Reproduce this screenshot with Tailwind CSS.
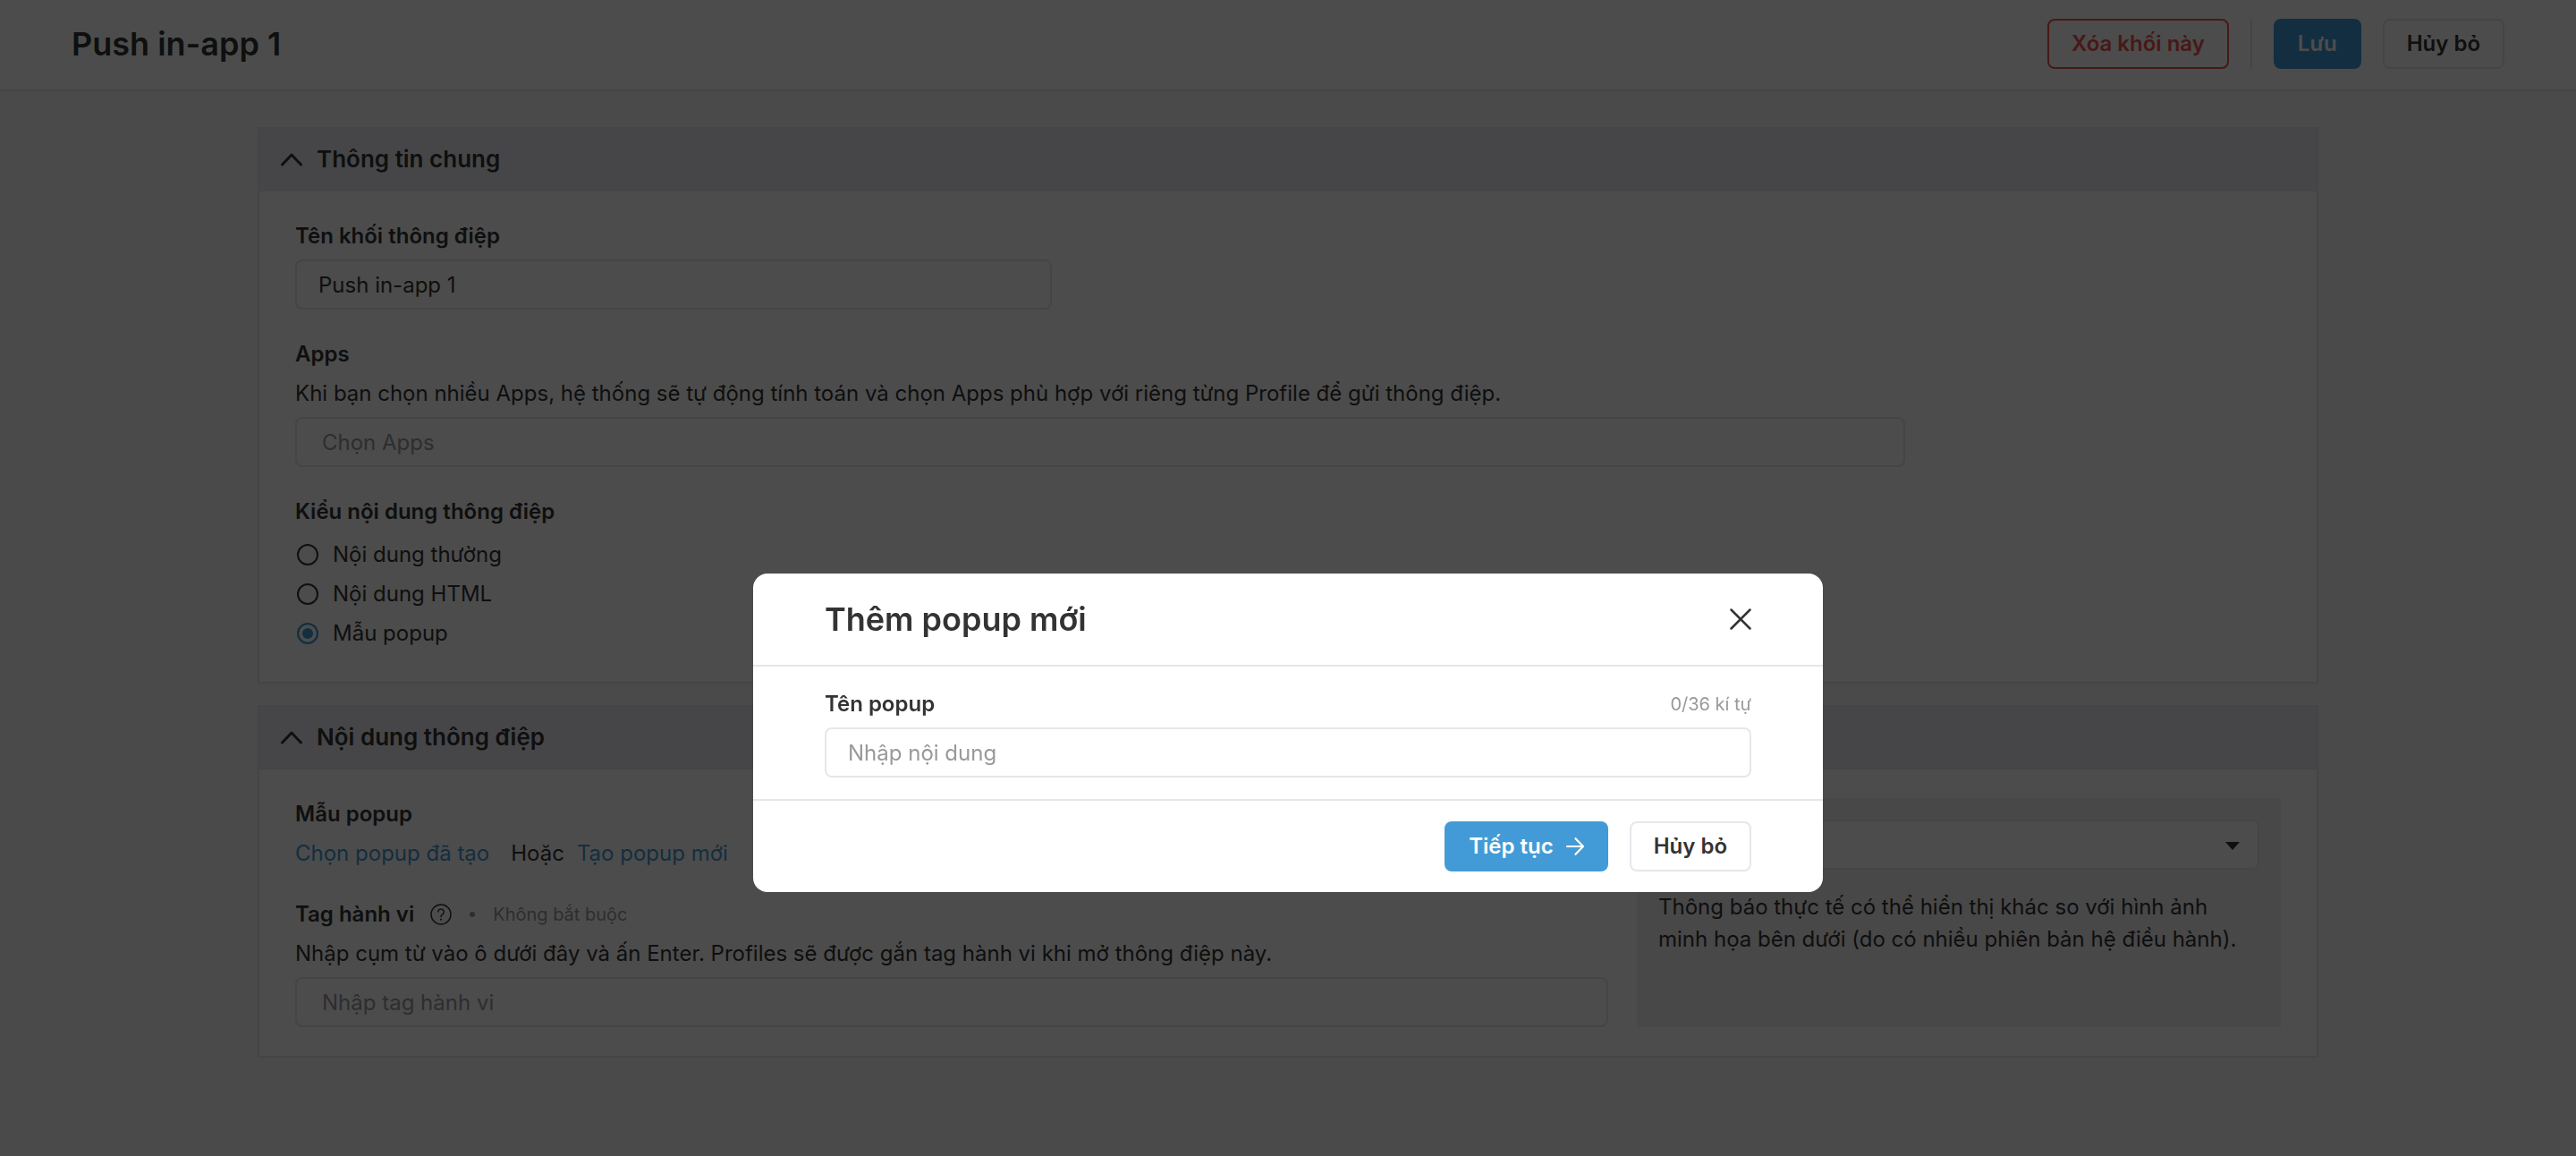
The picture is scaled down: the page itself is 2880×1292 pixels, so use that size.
<!DOCTYPE html>
<html lang="vi">
<head>
    <meta charset="UTF-8">
    <meta name="viewport" content="width=device-width, initial-scale=1.0">
    <title>Push in-app 1</title>
    <script src="https://cdn.jsdelivr.net/npm/@tailwindcss/browser@4"></script>
</head>
<body class="font-[Inter,'Noto_Sans',sans-serif] text-2xl leading-9 text-[#333] bg-[#f7f9fc] min-h-screen">

    <!-- Page header -->
    <header class="flex items-center justify-between h-[102px] px-20 pb-0.5 bg-white border-b-2 border-[#e6e6ec]">
        <h1 class="text-4xl font-semibold">Push in-app 1</h1>
        <div class="flex items-center gap-6">
            <button type="button" class="h-14 px-[25px] rounded-lg border-2 border-[#ef5350] text-[#ef5350] font-semibold">Xóa khối này</button>
            <span class="w-0.5 h-14 bg-[#e6e6ec]"></span>
            <button type="button" class="h-14 px-[25px] rounded-lg border-2 border-[#429bd6] bg-[#429bd6] text-white font-semibold">Lưu</button>
            <button type="button" class="h-14 px-[25px] rounded-lg border-2 border-[#e6e6ec] bg-white font-semibold">Hủy bỏ</button>
        </div>
    </header>

    <main class="w-4/5 mx-auto pt-10 flex flex-col gap-6">
        <!-- General information -->
        <section class="bg-white border-2 border-[#e6e8ec]">
            <div class="flex items-center gap-4 h-[70px] px-6 bg-[#e9ecf0] border-b-2 border-[#e6e8ec]">
                <svg class="w-6 h-6" viewBox="0 0 24 24" fill="none" stroke="currentColor" stroke-width="3" stroke-linecap="round" stroke-linejoin="round"><path d="M1.500 18 12 7l10.500 11"/></svg>
                <h2 class="text-[26px] font-semibold">Thông tin chung</h2>
            </div>
            <div class="px-10 py-8">
                <label for="blockName" class="block h-11 font-semibold">Tên khối thông điệp</label>
                <input id="blockName" type="text" value="Push in-app 1" class="block w-[846px] h-14 px-6 rounded-lg border-2 border-[#e6e6ec]">

                <label for="apps" class="block mt-8 h-11 font-semibold">Apps</label>
                <p class="h-11">Khi bạn chọn nhiều Apps, hệ thống sẽ tự động tính toán và chọn Apps phù hợp với riêng từng Profile để gửi thông điệp.</p>
                <input id="apps" type="text" placeholder="Chọn Apps" class="block w-[1800px] h-14 px-7 rounded-lg border-2 border-[#e6e6ec] placeholder:text-[#999]">

                <fieldset class="mt-8">
                    <legend class="h-11 font-semibold">Kiểu nội dung thông điệp</legend>
                    <label class="flex items-center gap-4 h-11 pl-0.5">
                        <input type="radio" name="contentType" class="appearance-none w-6 h-6 rounded-full border-2 border-[#333] bg-white">
                        Nội dung thường
                    </label>
                    <label class="flex items-center gap-4 h-11 pl-0.5">
                        <input type="radio" name="contentType" class="appearance-none w-6 h-6 rounded-full border-2 border-[#333] bg-white">
                        Nội dung HTML
                    </label>
                    <label class="flex items-center gap-4 h-11 pl-0.5">
                        <input type="radio" name="contentType" checked class="appearance-none w-6 h-6 rounded-full border-2 border-[#429bd6] bg-[#429bd6] inset-ring-4 inset-ring-white">
                        Mẫu popup
                    </label>
                </fieldset>
            </div>
        </section>

        <!-- Message content -->
        <section class="bg-white border-2 border-[#e6e8ec]">
            <div class="flex items-center gap-4 h-[70px] px-6 bg-[#e9ecf0] border-b-2 border-[#e6e8ec]">
                <svg class="w-6 h-6" viewBox="0 0 24 24" fill="none" stroke="currentColor" stroke-width="3" stroke-linecap="round" stroke-linejoin="round"><path d="M1.500 18 12 7l10.500 11"/></svg>
                <h2 class="text-[26px] font-semibold">Nội dung thông điệp</h2>
            </div>
            <div class="flex gap-8 px-10 py-8">
                <div class="flex-1">
                    <h3 class="h-11 font-semibold">Mẫu popup</h3>
                    <p class="flex">
                        <a href="#" class="text-[#429bd6]">Chọn popup đã tạo</a>
                        <span class="ml-6 mr-3.5">Hoặc</span>
                        <a href="#" class="text-[#429bd6]">Tạo popup mới</a>
                    </p>
                    <div class="flex items-center mt-8 mb-2">
                        <label for="tags" class="font-semibold">Tag hành vi</label>
                        <svg class="w-6 h-6 ml-4.5" viewBox="0 0 24 24" fill="none" stroke="currentColor" stroke-width="1.500" stroke-linecap="round"><circle cx="12" cy="12" r="11"/><path d="M8.800 9a3.200 3.200 0 1 1 5 2.800c-1.200.800-1.800 1.300-1.800 2.600"/><path d="M12 17.500v.200" stroke-width="2"/></svg>
                        <span class="w-1.5 h-1.5 mx-5 rounded-full bg-[#999]"></span>
                        <span class="text-xl text-[#999]">Không bắt buộc</span>
                    </div>
                    <p class="h-11">Nhập cụm từ vào ô dưới đây và ấn Enter. Profiles sẽ được gắn tag hành vi khi mở thông điệp này.</p>
                    <input id="tags" type="text" placeholder="Nhập tag hành vi" class="block w-full h-14 px-7 rounded-lg border-2 border-[#e6e6ec] placeholder:text-[#999]">
                </div>
                <aside class="w-[720px] p-6 bg-[#f0f0f0]">
                    <div class="relative">
                        <select aria-label="Thiết bị" class="appearance-none block w-full h-14 px-6 rounded-lg border-2 border-[#e6e6ec] bg-white"></select>
                        <svg class="absolute right-5.5 top-6 w-4 h-4" viewBox="0 0 16 16" fill="currentColor"><path d="M0 1h16L8 10z"/></svg>
                    </div>
                    <p class="mt-6">Thông báo thực tế có thể hiển thị khác so với hình ảnh minh họa bên dưới (do có nhiều phiên bản hệ điều hành).</p>
                </aside>
            </div>
        </section>
    </main>

    <!-- New popup dialog -->
    <div class="fixed inset-0 flex items-start justify-center pt-[641px] bg-black/70">
        <div role="dialog" aria-labelledby="dialogTitle" class="w-[1196px] rounded-2xl bg-white">
            <div class="flex items-center justify-between h-[104px] px-20 border-b-2 border-[#e6e6ec]">
                <h2 id="dialogTitle" class="text-4xl font-semibold">Thêm popup mới</h2>
                <button type="button" aria-label="Đóng">
                    <svg class="w-6 h-6" viewBox="0 0 24 24" fill="none" stroke="currentColor" stroke-width="2.500" stroke-linecap="round"><path d="M1.500 1.500l21 21M22.500 1.500l-21 21"/></svg>
                </button>
            </div>
            <div class="px-20 py-6 border-b-2 border-[#e6e6ec]">
                <div class="flex items-center justify-between mb-2">
                    <label for="popupName" class="font-semibold">Tên popup</label>
                    <span class="text-xl text-[#999]">0/36 kí tự</span>
                </div>
                <input id="popupName" type="text" placeholder="Nhập nội dung" class="block w-full h-14 px-6 rounded-lg border-2 border-[#e6e6ec] placeholder:text-[#999]">
            </div>
            <div class="flex items-center justify-end gap-6 h-[102px] px-20">
                <button type="button" class="flex items-center gap-3.5 h-14 px-[25px] rounded-lg border-2 border-[#429bd6] bg-[#429bd6] text-white font-semibold">
                    Tiếp tục
                    <svg class="w-5 h-5" viewBox="0 0 20 20" fill="none" stroke="currentColor" stroke-width="2.200" stroke-linecap="round" stroke-linejoin="round"><path d="M1 10h18M10.500 1.200 19 10l-8.500 8.800"/></svg>
                </button>
                <button type="button" class="h-14 px-[25px] rounded-lg border-2 border-[#e6e6ec] bg-white font-semibold">Hủy bỏ</button>
            </div>
        </div>
    </div>
</body>
</html>
